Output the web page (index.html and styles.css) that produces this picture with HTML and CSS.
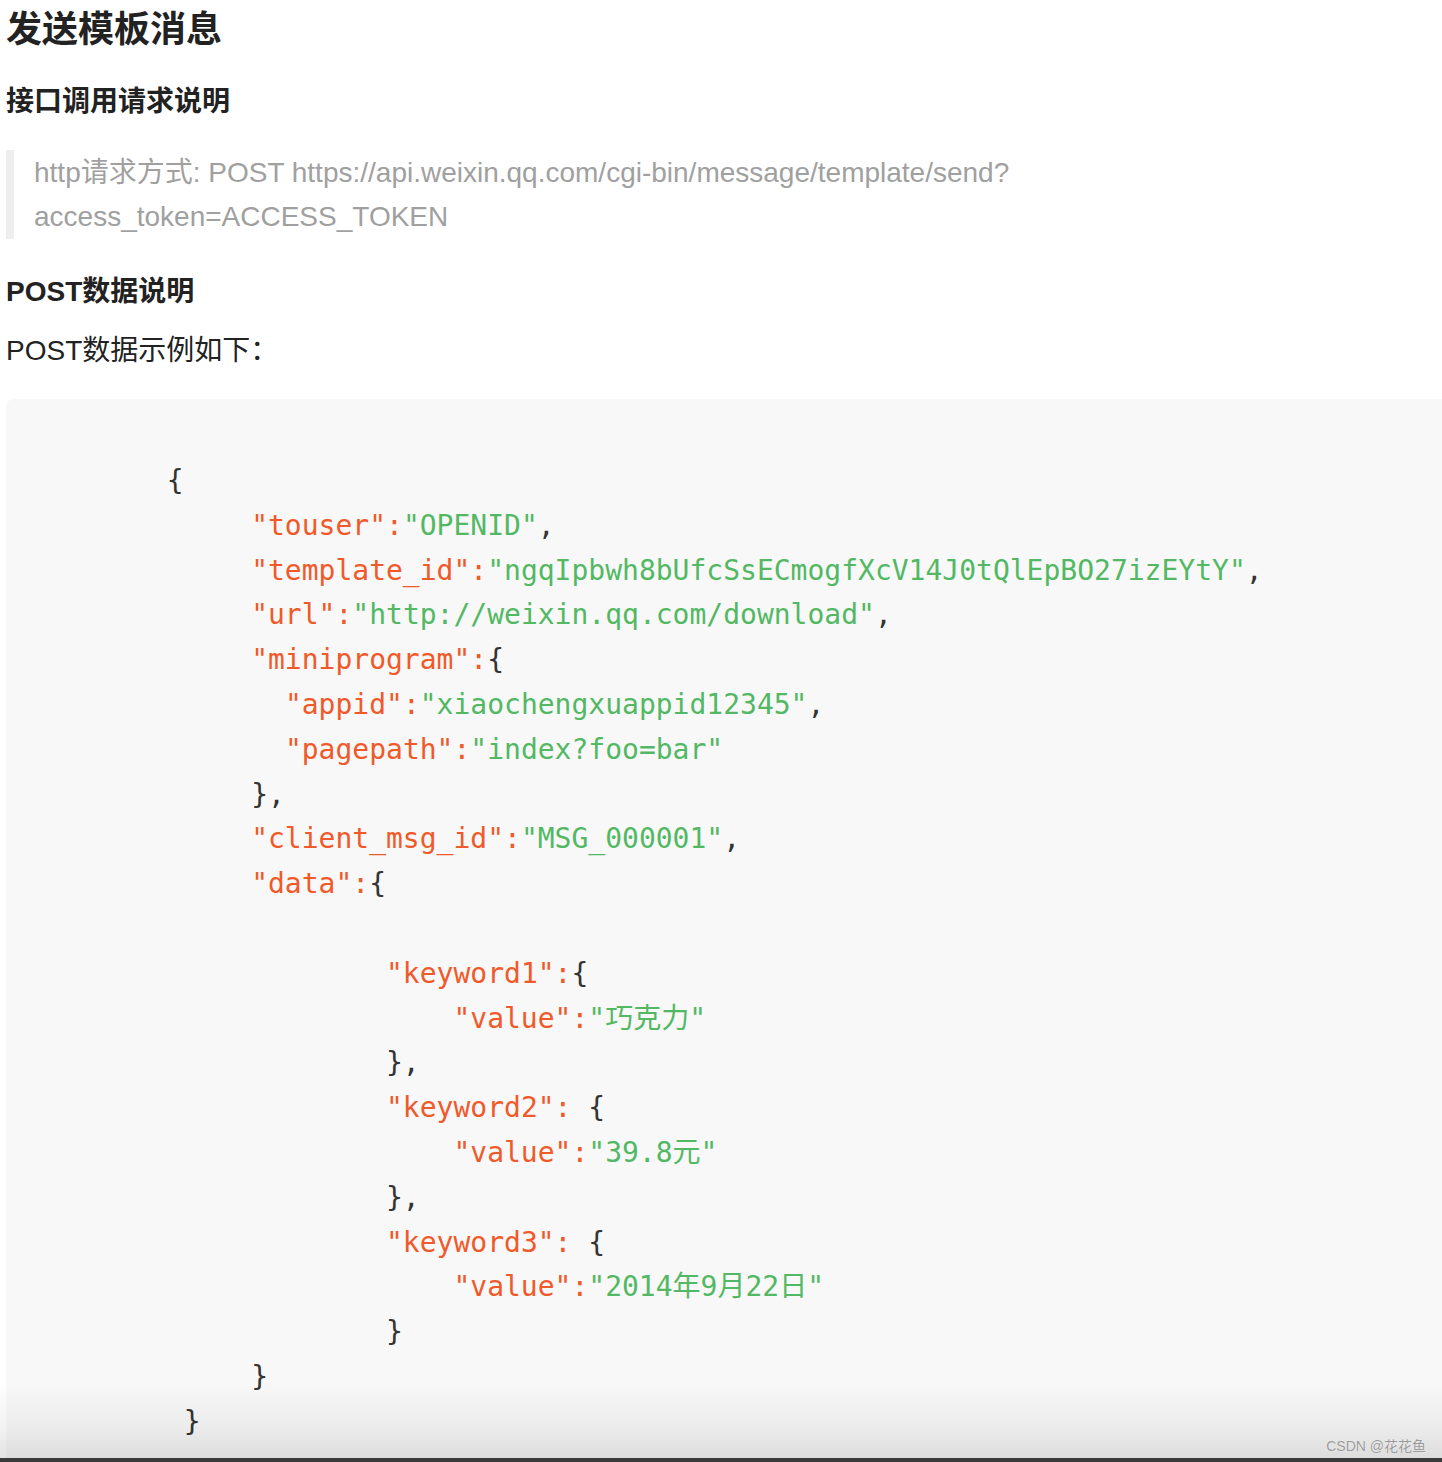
FILE: index.html
```html
<!DOCTYPE html>
<html lang="zh-CN">
<head>
<meta charset="utf-8">
<title>发送模板消息</title>
<link rel="stylesheet" href="styles.css">
</head>
<body>
<div class="page">
  <h1 class="title">发送模板消息</h1>
  <h3 class="sub">接口调用请求说明</h3>
  <blockquote class="quote">http请求方式: POST https://api.weixin.qq.com/cgi-bin/message/template/send?<br>access_token=ACCESS_TOKEN</blockquote>
  <h4 class="sub sub-post">POST数据说明</h4>
  <p class="para">POST数据示例如下：</p>
  <pre class="code"><code>        {
             <span class="k">"touser":</span><span class="s">"OPENID"</span>,
             <span class="k">"template_id":</span><span class="s">"ngqIpbwh8bUfcSsECmogfXcV14J0tQlEpBO27izEYtY"</span>,
             <span class="k">"url":</span><span class="s">"http://weixin.qq.com/download"</span>,
             <span class="k">"miniprogram":</span>{
               <span class="k">"appid":</span><span class="s">"xiaochengxuappid12345"</span>,
               <span class="k">"pagepath":</span><span class="s">"index?foo=bar"</span>
             },
             <span class="k">"client_msg_id":</span><span class="s">"MSG_000001"</span>,
             <span class="k">"data":</span>{

                     <span class="k">"keyword1":</span>{
                         <span class="k">"value":</span><span class="s">"巧克力"</span>
                     },
                     <span class="k">"keyword2":</span> {
                         <span class="k">"value":</span><span class="s">"39.8元"</span>
                     },
                     <span class="k">"keyword3":</span> {
                         <span class="k">"value":</span><span class="s">"2014年9月22日"</span>
                     }
             }
         }</code></pre>
</div>
<div class="shade"></div>
<div class="watermark">CSDN @花花鱼</div>
</body>
</html>
```
FILE: styles.css
```css
html, body {
  margin: 0;
  padding: 0;
  background: #ffffff;
}
body {
  position: relative;
  height: 1462px;
  overflow: hidden;
  font-family: "Liberation Sans", "Noto Sans CJK SC", sans-serif;
  color: #222222;
}
.page {
  padding: 5px 0 0 6px;
}
.title {
  margin: 0;
  font-size: 36px;
  line-height: 50px;
  font-weight: 600;
  color: #222222;
}
.sub {
  margin: 27px 0 0 0;
  font-size: 28px;
  line-height: 40px;
  font-weight: 600;
  color: #222222;
}
.quote {
  margin: 28px 0 0 0;
  padding: 1px 0 0 20px;
  height: 88px;
  border-left: 8px solid #eeeeee;
  font-size: 28px;
  line-height: 44px;
  color: #a0a0a0;
}
.sub-post {
  margin-top: 33px;
}
.para {
  margin: 19px 0 0 0;
  font-size: 28px;
  line-height: 40px;
  color: #222222;
}
.code {
  margin: 28px 0 0 0;
  padding: 60px 0 40px 26px;
  background: #f8f8f8;
  border-radius: 8px 0 0 8px;
  font-family: "DejaVu Sans Mono", "Noto Sans CJK SC", monospace;
  font-size: 28px;
  line-height: 44.8px;
  color: #333333;
  white-space: pre;
}
.code code {
  font-family: inherit;
}
.k {
  color: #f05a2a;
}
.s {
  color: #52b863;
}
.shade {
  position: absolute;
  left: 0;
  right: 0;
  bottom: 0;
  height: 80px;
  background: linear-gradient(to bottom, rgba(0,0,0,0) 0%, rgba(0,0,0,0.05) 60%, rgba(0,0,0,0.11) 100%);
  border-bottom: 4px solid #3a3a3a;
  box-sizing: border-box;
}
.watermark {
  position: absolute;
  right: 16px;
  bottom: 7px;
  font-family: "Liberation Sans", "Noto Sans CJK SC", sans-serif;
  font-size: 14px;
  line-height: 18px;
  color: #9a9a9a;
  text-shadow: 0 0 1px #ffffff;
}
```
